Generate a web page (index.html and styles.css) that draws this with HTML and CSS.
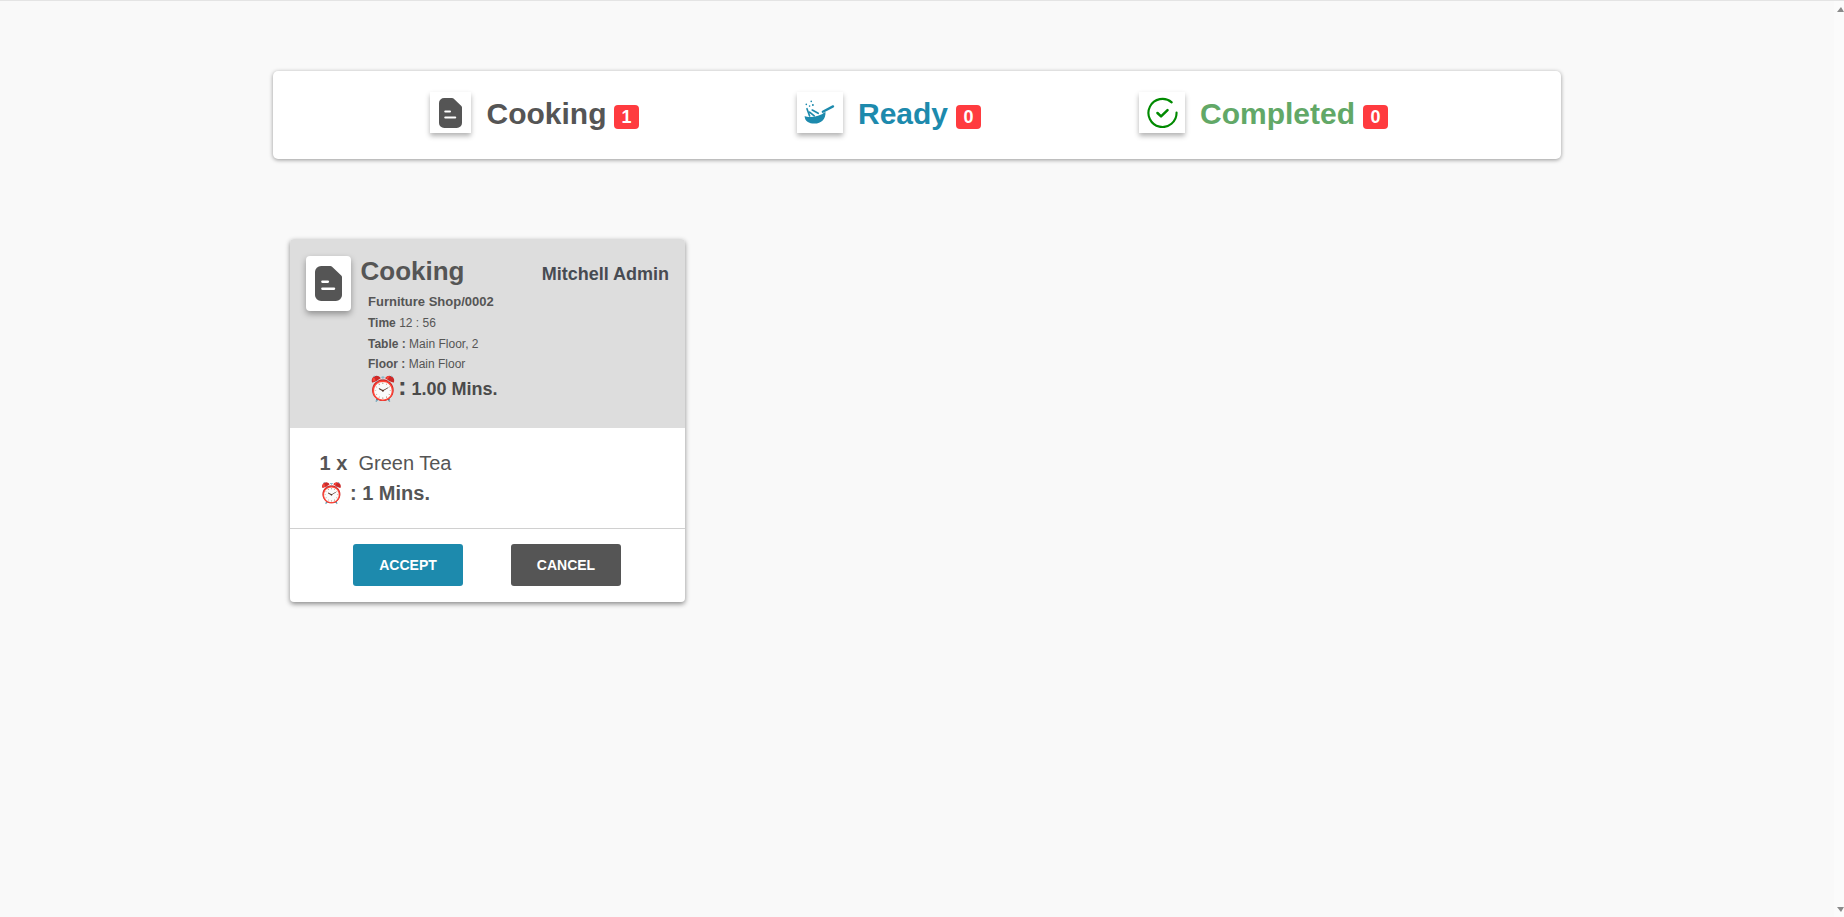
FILE: index.html
```html
<!DOCTYPE html>
<html lang="en">
<head>
    <meta charset="UTF-8">
    <meta name="viewport" content="width=device-width, initial-scale=1.0">
    <title>Kitchen Screen</title>
    <link rel="stylesheet" href="styles.css">
</head>
<body>

    <div class="page">
        <!-- Top bar: order stages -->
        <div class="stage-bar">
            <div class="stage stage-cooking">
                <span class="stage-icon stage-icon-small">
                    <svg width="23" height="30" viewBox="0 0 22 30" preserveAspectRatio="none"><path fill="#555" d="M5 0h7.500a2 2 0 0 1 1.400.6l7.500 7.500a2 2 0 0 1 .6 1.400V25a5 5 0 0 1-5 5H5a5 5 0 0 1-5-5V5a5 5 0 0 1 5-5z"/><path fill="none" stroke="#fff" stroke-width="2" stroke-linecap="round" d="M6 13.500h4.500M6 19.500h9.500"/></svg>
                </span>
                <span class="stage-name">Cooking</span>
                <span class="badge">1</span>
            </div>
            <div class="stage stage-ready">
                <span class="stage-icon">
                    <svg width="33" height="25" viewBox="100 120 100 75">
                        <path fill="#1d8aad" d="M105 168C118 174 148 172 168 155C170 177 155 191 135 191C118 191 105 184 105 168Z"/>
                        <path fill="none" stroke="#1d8aad" stroke-width="7" stroke-linecap="round" d="M160 155L191 139"/>
                        <path fill="none" stroke="#1d8aad" stroke-width="5" stroke-linecap="round" d="M112 146L120 168M120 156L134 168M128 150L146 160"/>
                        <circle fill="#1d8aad" cx="110" cy="133" r="2.500"/>
                        <circle fill="#1d8aad" cx="125" cy="124" r="2.500"/>
                        <circle fill="#1d8aad" cx="130" cy="135" r="3"/>
                        <circle fill="#1d8aad" cx="120" cy="138" r="2.500"/>
                    </svg>
                </span>
                <span class="stage-name">Ready</span>
                <span class="badge">0</span>
            </div>
            <div class="stage stage-completed">
                <span class="stage-icon">
                    <svg width="31" height="31" viewBox="0 0 32 32"><path fill="none" stroke="#008a00" stroke-width="2.200" stroke-linecap="round" d="M25.500 5.500A14.500 14.500 0 1 0 30.500 16"/><path fill="none" stroke="#008a00" stroke-width="2.600" stroke-linecap="round" stroke-linejoin="round" d="M10.800 16.500l3.700 3.500 6.700-6.500"/></svg>
                </span>
                <span class="stage-name">Completed</span>
                <span class="badge">0</span>
            </div>
        </div>

        <!-- Order card -->
        <div class="order-card">
            <div class="order-head">
                <span class="order-icon">
                    <svg width="27" height="35" viewBox="0 0 22 30" preserveAspectRatio="none"><path fill="#555" d="M5 0h7.500a2 2 0 0 1 1.400.6l7.500 7.500a2 2 0 0 1 .6 1.400V25a5 5 0 0 1-5 5H5a5 5 0 0 1-5-5V5a5 5 0 0 1 5-5z"/><path fill="none" stroke="#fff" stroke-width="2" stroke-linecap="round" d="M6 13.500h4.500M6 19.500h9.500"/></svg>
                </span>
                <div class="order-info">
                    <div class="order-title-row">
                        <h2>Cooking</h2>
                        <span class="order-user">Mitchell Admin</span>
                    </div>
                    <div class="order-details">
                        <p class="order-ref"><b>Furniture Shop/0002</b></p>
                        <p><b>Time</b> 12 : 56</p>
                        <p><b>Table :</b> Main Floor, 2</p>
                        <p><b>Floor :</b> Main Floor</p>
                        <p class="order-timer"><span class="clock">⏰</span><b class="colon">:</b> <b>1.00 Mins.</b></p>
                    </div>
                </div>
            </div>
            <div class="order-lines">
                <p><b>1 x</b>&nbsp; Green Tea</p>
                <p><span class="clock-small">⏰</span> <b>: 1 Mins.</b></p>
            </div>
            <div class="order-actions">
                <button class="btn btn-accept">ACCEPT</button>
                <button class="btn btn-cancel">CANCEL</button>
            </div>
        </div>
    </div>

    <!-- Scrollbar strip -->
    <div class="scroll-strip">
        <span class="arrow-up"></span>
        <span class="arrow-down"></span>
    </div>

</body>
</html>
```

FILE: styles.css
```css
/* Basic Reset */
* {
    margin: 0;
    padding: 0;
    box-sizing: border-box;
}

html, body {
    height: 100%;
    overflow: hidden;
}

body {
    font-family: "Liberation Sans", Arial, sans-serif;
    display: flex;
    background-color: #f9f9f9;
    color: #555;
    border-top: 1px solid #e4e4e4;
}

.page {
    flex: 1;
    min-width: 0;
    padding-top: 70px;
}

.scroll-strip {
    width: 10px;
    background-color: #fbfbfb;
    display: flex;
    flex-direction: column;
    justify-content: space-between;
    align-items: flex-end;
    padding: 6px 0 5px;
}

.arrow-up, .arrow-down {
    width: 0;
    height: 0;
    border-left: 4px solid transparent;
    border-right: 3px solid transparent;
}

.arrow-up {
    border-bottom: 5px solid #8a8a8a;
}

.arrow-down {
    border-top: 5px solid #8a8a8a;
}

/* Stage bar */
.stage-bar {
    width: 1288px;
    height: 88px;
    margin: 0 auto;
    padding: 21px 16px 0 0;
    background-color: #fff;
    border-radius: 5px;
    box-shadow: 0 1px 4px rgba(0, 0, 0, 0.4);
    display: flex;
    justify-content: center;
    align-items: flex-start;
    gap: 158px;
}

.stage {
    display: flex;
    align-items: center;
    height: 41px;
}

.stage-icon {
    width: 46px;
    height: 41px;
    background-color: #fff;
    box-shadow: 0 3px 5px rgba(0, 0, 0, 0.3);
    display: flex;
    align-items: center;
    justify-content: center;
    margin-right: 15px;
}

.stage-icon-small {
    width: 41px;
    margin-right: 15.500px;
}

.stage-name {
    font-size: 30px;
    font-weight: bold;
    margin: 2px 8px 0 0;
}

.stage-cooking .stage-name {
    margin-right: 7.500px;
}

.stage-ready .stage-name {
    color: #1d8aad;
}

.stage-completed .stage-name {
    color: #62a867;
}

.badge {
    width: 25px;
    height: 24px;
    margin-top: 8px;
    background-color: #ff3b3f;
    color: #fff;
    border-radius: 4px;
    font-size: 18px;
    font-weight: bold;
    line-height: 25px;
    text-align: center;
}

/* Order card */
.order-card {
    width: 395px;
    margin: 80px 0 0 290px;
    background-color: #fff;
    border-radius: 4px;
    box-shadow: 0 2px 5px rgba(0, 0, 0, 0.45);
}

.order-head {
    height: 189px;
    padding: 17px 16px 0 16px;
    background-color: #ddd;
    border-radius: 4px 4px 0 0;
    display: flex;
    align-items: flex-start;
    gap: 9.500px;
}

.order-icon {
    flex: none;
    width: 45px;
    height: 55px;
    background-color: #fff;
    border-radius: 4px;
    box-shadow: 0 3px 6px rgba(0, 0, 0, 0.35);
    display: flex;
    align-items: center;
    justify-content: center;
}

.order-info {
    flex: 1;
}

.order-title-row {
    display: flex;
    justify-content: space-between;
    align-items: flex-start;
}

.order-title-row h2 {
    font-size: 26px;
    line-height: 30px;
}

.order-user {
    font-size: 18px;
    font-weight: bold;
    line-height: 21px;
    margin-top: 8px;
    color: #474b52;
}

.order-details {
    padding: 6.300px 0 0 7.500px;
    font-size: 12px;
    color: #555;
}

.order-details p {
    line-height: 20.700px;
}

.order-details .order-ref {
    font-size: 13px;
}

.order-details .order-timer {
    font-size: 18px;
    line-height: 26px;
    margin-top: -2.300px;
    color: #4a4a4a;
}

.clock {
    font-size: 24px;
    font-family: "Noto Color Emoji", sans-serif;
    vertical-align: -2px;
}

.colon {
    font-size: 26px;
}

.order-lines {
    height: 101px;
    padding: 20px 0 0 29.500px;
    font-size: 20px;
    line-height: 30px;
    border-bottom: 1px solid #d0d0d0;
}

.clock-small {
    font-size: 20px;
    font-family: "Noto Color Emoji", sans-serif;
}

.order-actions {
    height: 73px;
    padding: 15px 1px 0 0;
    display: flex;
    justify-content: center;
    gap: 48px;
}

.btn {
    width: 110px;
    height: 42px;
    border: none;
    border-radius: 3px;
    color: #fff;
    font-family: inherit;
    font-size: 14px;
    font-weight: bold;
}

.btn-accept {
    background-color: #1d8aad;
}

.btn-cancel {
    background-color: #555;
}
```
